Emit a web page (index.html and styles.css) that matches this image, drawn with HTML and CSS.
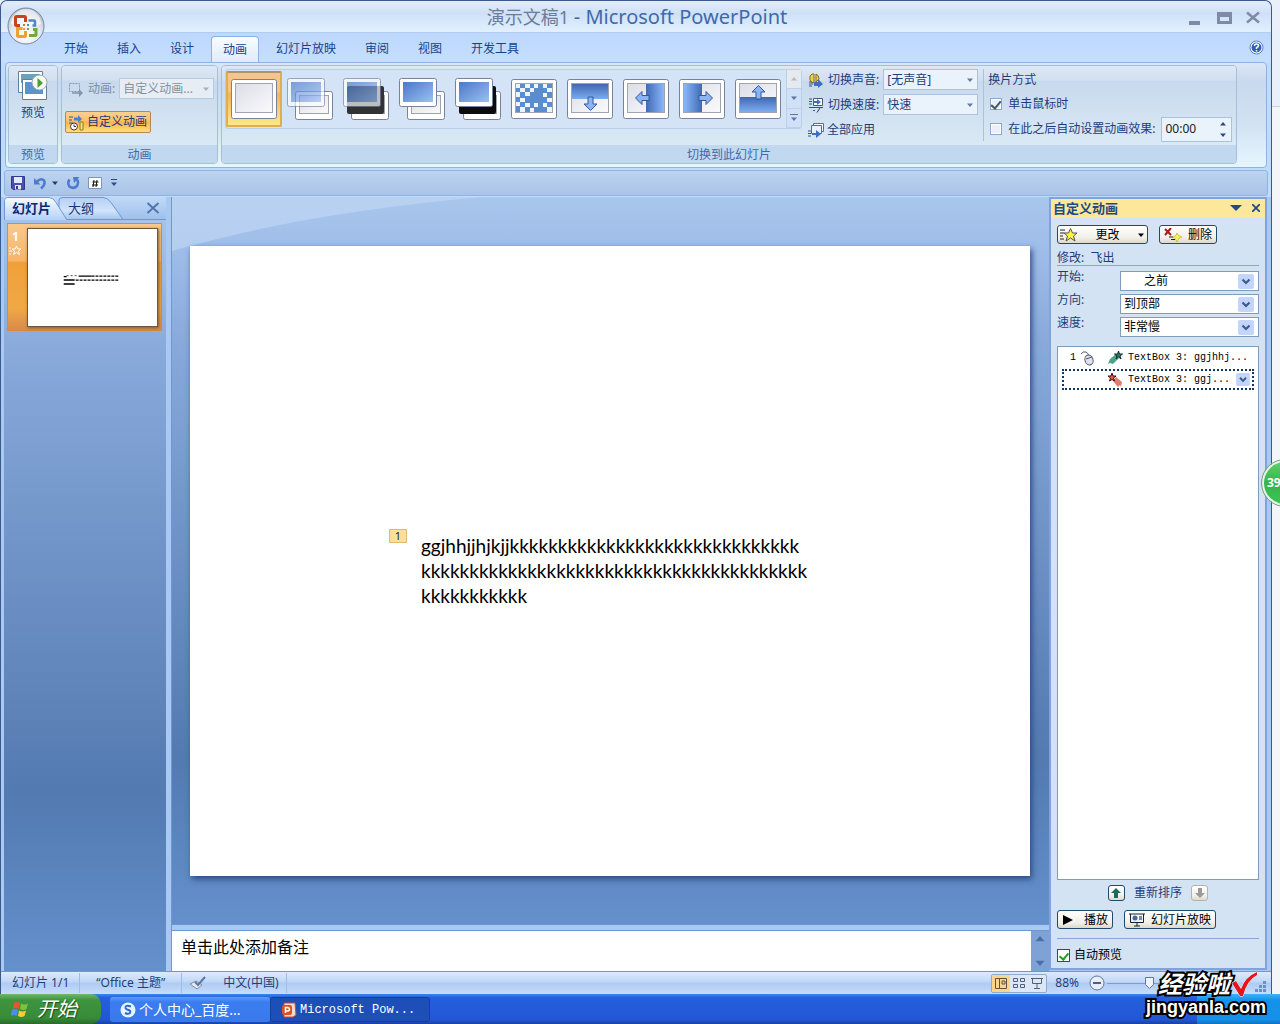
FILE: index.html
```html
<!DOCTYPE html>
<html lang="zh-CN">
<head>
<meta charset="utf-8">
<title>演示文稿1 - Microsoft PowerPoint</title>
<link rel="stylesheet" href="styles.css">
</head>
<body>
<svg class="defs" aria-hidden="true">
  <defs>
    <linearGradient id="blue" x1="0" y1="0" x2="1" y2="1"><stop offset="0" stop-color="#4a78c8"/><stop offset="1" stop-color="#9cc0f4"/></linearGradient>
    <linearGradient id="blueUp" x1="0" y1="0" x2="0" y2="1"><stop offset="0" stop-color="#3f68b0"/><stop offset="1" stop-color="#7eacf0"/></linearGradient>
    <linearGradient id="blueR" x1="0" y1="0" x2="1" y2="0"><stop offset="0" stop-color="#4069b4"/><stop offset="1" stop-color="#8ab8fa"/></linearGradient>
    <linearGradient id="blueL" x1="0" y1="0" x2="1" y2="0"><stop offset="0" stop-color="#8ab8fa"/><stop offset="1" stop-color="#4069b4"/></linearGradient>
    <linearGradient id="pale" x1="0" y1="0" x2="1" y2="1"><stop offset="0" stop-color="#dcdde6"/><stop offset="1" stop-color="#fbfbfd"/></linearGradient>
    <linearGradient id="tabOn" x1="0" y1="0" x2="0" y2="1"><stop offset="0" stop-color="#f6faff"/><stop offset="1" stop-color="#b6d2f6"/></linearGradient>
    <linearGradient id="tabOff" x1="0" y1="0" x2="0" y2="1"><stop offset="0" stop-color="#b4d0f6"/><stop offset="0.6" stop-color="#d2e4fb"/><stop offset="1" stop-color="#a4c4ee"/></linearGradient>
    <symbol id="frame" viewBox="0 0 46 40">
      <rect x=".5" y=".5" width="45" height="39" rx="2" fill="#fff" stroke="#76839a"/>
      <rect x="4.500" y="4.500" width="37" height="29" fill="url(#pale)" stroke="#a0a4b0"/>
    </symbol>
    <symbol id="backslide" viewBox="0 0 46 42">
      <rect x="8.500" y="13.500" width="37" height="28" rx="2" fill="#fff" stroke="#76839a"/>
      <rect x="12.500" y="17.500" width="29" height="18" fill="url(#pale)" stroke="#a0a4b0"/>
    </symbol>
    <symbol id="topslide" viewBox="0 0 46 42">
      <rect x=".5" y=".5" width="37" height="28" rx="2" fill="#fff" stroke="#76839a"/>
      <rect x="4" y="4" width="30" height="20" fill="url(#blue)"/>
    </symbol>
    <symbol id="down" viewBox="0 0 8 8"><path d="M1 2.500h6L4 6z" fill="currentColor"/></symbol>
    <symbol id="up" viewBox="0 0 8 8"><path d="M1 5.500h6L4 2z" fill="currentColor"/></symbol>
    <symbol id="chev" viewBox="0 0 16 15"><rect width="16" height="15" rx="2" fill="#c3d5fa"/><path d="M4.500 5.500 8 9l3.500-3.500" fill="none" stroke="#3d5a8c" stroke-width="2.200"/></symbol>
  </defs>
</svg>

<div class="screen">
<main class="window">
  <header class="titlebar">
    <button class="office" aria-label="Office">
      <svg viewBox="0 0 38 38" width="38" height="38">
        <defs><radialGradient id="orb" cx=".5" cy=".75" r=".7"><stop offset="0" stop-color="#fff"/><stop offset=".6" stop-color="#e2e6ee"/><stop offset="1" stop-color="#b3bccd"/></radialGradient></defs>
        <circle cx="19" cy="19" r="18" fill="url(#orb)" stroke="#76869f"/>
        <path d="M4 17a15 15 0 0 1 30 0q-15 6-30 0z" fill="#fff" opacity=".6"/>
        <g fill="none" stroke-width="3">
          <path d="M13 18.500H9.500q-1 0-1-1v-7q0-1 1-1h8q1 0 1 1V15" stroke="#c8421c"/>
          <path d="M21.500 13.500H27q1 0 1 1v4h-2.500" stroke="#4f86c6" stroke-width="2.500"/>
          <path d="M18.500 24v4.500q0 1-1 1h-6q-1 0-1-1v-7h5" stroke="#f0a030"/>
          <path d="M22 28.500h6q1 0 1-1v-5h-3" stroke="#6cab3c"/>
        </g>
        <g fill="#d9742c"><rect x="16" y="17" width="2" height="2"/><rect x="20" y="17" width="2" height="2" fill="#4f86c6"/><rect x="20" y="21" width="2" height="2" fill="#6cab3c"/><rect x="16" y="21" width="2" height="2" fill="#f0a030"/></g>
      </svg>
    </button>
    <h1 class="title">演示文稿1 <span>- Microsoft PowerPoint</span></h1>
    <div class="winbtns">
      <button aria-label="最小化"><svg width="16" height="16"><path d="M2 12h11v4H2z" fill="#7d8ba6"/></svg></button>
      <button aria-label="最大化"><svg width="16" height="16"><path d="M1 3h15v12H1zM4 8v4h9V8z" fill="#7d8ba6" fill-rule="evenodd"/></svg></button>
      <button aria-label="关闭"><svg width="16" height="16"><path d="M2 3.500 14 13.500M14 3.500 2 13.500" stroke="#7d8ba6" stroke-width="2.500"/></svg></button>
    </div>
  </header>

  <nav class="tabs">
    <button>开始</button><button>插入</button><button>设计</button><button class="on">动画</button><button>幻灯片放映</button><button>审阅</button><button>视图</button><button>开发工具</button>
    <button class="help" aria-label="帮助"><svg width="15" height="15" viewBox="0 0 15 15"><circle cx="7.500" cy="7.500" r="6.500" fill="#fff" stroke="#5b7fc0"/><circle cx="7.500" cy="7.500" r="5" fill="#2f5fbe"/><path d="M5.500 6q0-2 2-2t2 1.700q0 1-2 2V9M7.500 10v1.500" fill="none" stroke="#fff" stroke-width="1.500"/></svg></button>
  </nav>

  <section class="ribbon">
    <div class="group g-preview">
      <div class="gbody">
        <button class="big">
          <svg width="30" height="30" viewBox="0 0 30 30"><path d="M.5.500h24v21H.5z" fill="#fff" stroke="#5f7f9c"/><path d="M3 3h19v9H3z" fill="#6ca0bc"/><path d="M4.500 8.500h24v20h-24z" fill="#fff" stroke="#5f7f9c"/><path d="M7 11h18v12H7z" fill="#5b93cc"/><circle cx="21.500" cy="11.500" r="7.500" fill="#f6faf4" stroke="#9aa8b0"/><path d="M19.500 7l5.500 5-5.500 5z" fill="#4f9c34"/></svg>
          <span>预览</span>
        </button>
      </div>
      <div class="glabel">预览</div>
    </div>

    <div class="group g-anim">
      <div class="gbody anim">
        <div class="row">
          <svg width="16" height="16" viewBox="0 0 16 16"><path d="M1.500 2.500h10v8h-10z" fill="none" stroke="#8494ac" stroke-dasharray="2 1"/><path d="M4 12h8" stroke="#8494ac" stroke-width="1.500"/><path d="M11 8l4 4-4 4z" fill="#8494ac"/></svg>
          <label for="anim">动画:</label>
          <span class="pick dim"><select id="anim" disabled><option>自定义动画...</option></select><svg width="8" height="8"><use href="#down"/></svg></span>
        </div>
        <button class="custom">
          <svg width="17" height="17" viewBox="0 0 17 17"><path d="M1 3h4M1 6h3M1 9h4" stroke="#34528c"/><path d="M6 3.500h4V1l4 4-4 4V6.500H6z" fill="#4a7fd8"/><circle cx="6" cy="12.500" r="3.500" fill="#fff" stroke="#3c3c3c"/><path d="M6 10.500v2h2" fill="none" stroke="#333"/><path d="M12 8h3v8h-3z" fill="#f7e46c" stroke="#8a7a2c"/></svg>
          自定义动画
        </button>
      </div>
      <div class="glabel">动画</div>
    </div>

    <div class="group g-trans">
      <div class="gbody trans">
        <div class="gallery">
          <button class="cell sel" aria-label="无切换效果"><svg width="46" height="40"><use href="#frame"/></svg></button>
          <button class="cell" aria-label="平滑淡出"><svg width="46" height="42"><use href="#backslide"/><use href="#topslide" opacity=".65"/></svg></button>
          <button class="cell" aria-label="从全黑淡出"><svg width="46" height="42"><use href="#backslide"/><rect x="4" y="8" width="37" height="28" rx="2" fill="#303236"/><use href="#topslide" opacity=".68"/></svg></button>
          <button class="cell" aria-label="切出"><svg width="46" height="42"><use href="#backslide"/><use href="#topslide"/></svg></button>
          <button class="cell" aria-label="从全黑切出"><svg width="46" height="42"><use href="#backslide"/><rect x="4" y="8" width="37" height="28" rx="2" fill="#0c0c0e"/><use href="#topslide"/></svg></button>
          <button class="cell" aria-label="溶解"><svg width="46" height="40"><use href="#frame"/><rect x="5" y="5" width="36" height="28" fill="#5a8cd0"/><path fill="#eef4fb" d="M5 5h4v4H5zM14 5h5v4h-5zM9 9h5v4H9zM23 5h4v4h-4zM19 9h4v4h-4zM32 5h4v4h-4zM36 9h5v4h-5zM5 13h4v5H5zM14 13h5v4h-5zM32 14h4v4h-4zM5 23h4v4H5zM9 19h5v4H9zM9 28h5v5H9zM14 24h5v4h-5zM23 24h4v4h-4zM19 29h4v4h-4zM36 19h5v4h-5zM32 24h4v4h-4zM36 28h5v5h-5z"/></svg></button>
          <button class="cell" aria-label="向下擦除"><svg width="46" height="40"><use href="#frame"/><path d="M5 5h36v15H5z" fill="url(#blueUp)"/><path d="M21 18h5v7h4l-6.500 6.500L17 25h4z" fill="#8db4f2" stroke="#31599f"/></svg></button>
          <button class="cell" aria-label="向左擦除"><svg width="46" height="40"><use href="#frame"/><path d="M23 5h18v28H23z" fill="url(#blueR)"/><path d="M26 16.500v5h-7v4L12.500 19l6.500-6.500v4z" fill="#8db4f2" stroke="#31599f"/></svg></button>
          <button class="cell" aria-label="向右擦除"><svg width="46" height="40"><use href="#frame"/><path d="M5 5h18v28H5z" fill="url(#blueL)"/><path d="M20 16.500v5h7v4l6.500-6.500-6.500-6.500v4z" fill="#8db4f2" stroke="#31599f"/></svg></button>
          <button class="cell" aria-label="向上擦除"><svg width="46" height="40"><use href="#frame"/><path d="M5 18h36v15H5z" fill="url(#blueUp)"/><path d="M21 20h5v-7h4l-6.500-6.500L17 13h4z" fill="#8db4f2" stroke="#31599f"/></svg></button>
          <div class="gscroll">
            <button class="off" aria-label="上一行"><svg width="8" height="8"><use href="#up"/></svg></button>
            <button aria-label="下一行"><svg width="8" height="8"><use href="#down"/></svg></button>
            <button aria-label="其他"><svg width="8" height="10"><path d="M0 1.500h8" stroke="#5a76a4"/><path d="M1 4.500h6L4 8z" fill="#5a76a4"/></svg></button>
          </div>
        </div>

        <div class="opts">
          <svg width="16" height="16" viewBox="0 0 16 16"><path d="M2 4q2-3 4-2v9q-3 0-4-3zM8 2q3 1 3 5l-3 3z" fill="#f2d24c" stroke="#806a1c"/><path d="M1 10h3M1 12h4M1 14h3" stroke="#34528c"/><path d="M6 10h4V7l5 5-5 4v-2H6z" fill="#3f6cc4"/></svg>
          <label for="snd">切换声音:</label>
          <span class="pick"><select id="snd"><option>[无声音]</option></select><svg width="8" height="8"><use href="#down"/></svg></span>
          <svg width="16" height="16" viewBox="0 0 16 16"><path d="M1 2h3M1 4.500h3M1 7h3M1 10.500h14M5 13.500h2" stroke="#34528c"/><path d="M5.500 1.500h9v7h-9z" fill="#fff" stroke="#4a5a74"/><path d="M5 4h4V2l4 3-4 3V6H5z" fill="#3f6cc4"/><path d="M12 11l-3 4.500" stroke="#333"/></svg>
          <label for="spd">切换速度:</label>
          <span class="pick"><select id="spd"><option>快速</option></select><svg width="8" height="8"><use href="#down"/></svg></span>
          <button class="applyall"><svg width="16" height="16" viewBox="0 0 16 16"><path d="M5.500 1.500h10v8h-10z" fill="#fff" stroke="#5a6e8c"/><path d="M3.500 3.500h10v8h-10z" fill="#e8f0fa" stroke="#5a6e8c"/><path d="M0 9h3M0 11.500h3M0 14h3" stroke="#34528c"/><path d="M4 11h4V8l5 4-5 4v-3H4z" fill="#3f6cc4"/></svg>全部应用</button>
        </div>

        <fieldset class="advance">
          <legend>换片方式</legend>
          <label><input type="checkbox" class="tick" checked>单击鼠标时</label>
          <div class="after"><label><input type="checkbox" class="tick">在此之后自动设置动画效果:</label>
            <span class="spin"><input type="text" value="00:00" aria-label="时间"><span class="spinbtns"><button aria-label="增加"><svg width="8" height="8"><use href="#up"/></svg></button><button aria-label="减少"><svg width="8" height="8"><use href="#down"/></svg></button></span></span>
          </div>
        </fieldset>
      </div>
      <div class="glabel">切换到此幻灯片</div>
    </div>
  </section>

  <div class="qat">
    <button aria-label="保存"><svg width="14" height="14" viewBox="0 0 14 14"><path d="M.5.500h13v13H2l-1.500-1.500z" fill="#4a4fb0" stroke="#33388c"/><path d="M3 1h8v6H3z" fill="#dfeafc"/><path d="M4 9h6v4.500H4z" fill="#e8e8f4"/><path d="M5 10h2v3H5z" fill="#33388c"/></svg></button>
    <button class="undo" aria-label="撤消"><svg width="14" height="14" viewBox="0 0 14 14"><path d="M4 5.500Q8 1.500 11 4.500q2 4-3 8" fill="none" stroke="#4b7bd0" stroke-width="2.500"/><path d="M1 2v6.500h6.500z" fill="#4b7bd0"/></svg><svg width="6" height="8" viewBox="1 0 6 8"><use href="#down" width="8" height="8"/></svg></button>
    <button aria-label="重复"><svg width="14" height="14" viewBox="0 0 14 14"><path d="M3.500 3.500Q1 7 3.500 10.500q4 3 7.500-.5 2-4 0-6.500" fill="none" stroke="#4b7bd0" stroke-width="2.500"/><path d="M7 1h6.500L8 7z" fill="#4b7bd0"/></svg></button>
    <button aria-label="编号"><svg width="14" height="14" viewBox="0 0 14 14"><path d="M.5 1.500h13v11H.5z" fill="#fff" stroke="#7d93b8"/><path d="M6 4 5 11M9 4 8 11M4.500 6h6M4 9h6" stroke="#111"/></svg></button>
    <button class="more" aria-label="自定义"><svg width="8" height="10"><path d="M1 1.500h6" stroke="#2c4c86"/><path d="M1 4.500h6L4 8z" fill="#2c4c86"/></svg></button>
  </div>

  <div class="work">
    <aside class="outline">
      <div class="otabs">
        <svg class="oshape" viewBox="0 0 162 23" preserveAspectRatio="xMinYMin meet" height="23"><path d="M55 22.500V3q0-2.500 4-2.500h40q5 0 8 5l12 17z" fill="url(#tabOff)" stroke="#6d97d3"/><path d="M.5 23V3.500q0-3 3-3H45q4 0 7 5l11 17.500" fill="url(#tabOn)" stroke="#6d97d3"/></svg>
        <div class="obtns"><button class="on">幻灯片</button><button>大纲</button><button class="x" aria-label="关闭"><svg width="14" height="12"><path d="M1.500 1 12.500 11M12.500 1 1.500 11" stroke="#4b74ad" stroke-width="1.800"/></svg></button></div>
      </div>
      <div class="thumb">
        <div class="num"><b>1</b><svg width="12" height="11" viewBox="0 0 12 11"><path d="M7.500 1l1.200 3H12L9.500 6l1 3.500-3-2-3 2 1-3.500L3 4h3.200zM0 3h2M0 6h3M0 9h2" fill="none" stroke="#fff"/></svg></div>
        <div class="mini"><svg viewBox="0 0 130 98"><path d="M36 51.500h11M36 55.500h11M36 48h3M51 47.500h13" stroke="#000" stroke-width="1.500"/><path d="M39 47h12" stroke="#555" stroke-dasharray="2 2"/><path d="M64 47.500h27M48 51.500h43" stroke="#000" stroke-dasharray="3 1" stroke-width="1.300"/></svg></div>
      </div>
    </aside>

    <section class="center">
      <div class="stage">
        <svg class="swoosh" viewBox="0 0 876 60" preserveAspectRatio="none"><path d="M0 0H310Q130 16 0 54z" fill="#c4d9f5" opacity=".6"/></svg>
        <div class="slide">
          <span class="seq">1</span>
          <p class="textbox">ggjhhjjhjkjjkkkkkkkkkkkkkkkkkkkkkkkkkkkkkk<br>kkkkkkkkkkkkkkkkkkkkkkkkkkkkkkkkkkkkkkkk<br>kkkkkkkkkkk</p>
        </div>
      </div>
      <div class="notes">
        <textarea aria-label="备注" rows="1">单击此处添加备注</textarea>
        <div class="nscroll"><svg width="12" height="12"><use href="#up"/></svg><svg width="12" height="12"><use href="#down"/></svg></div>
      </div>
    </section>

    <aside class="pane">
      <div class="phead"><b>自定义动画</b><svg width="12" height="6"><path d="M0 0h12L6 6z" fill="#1f4a86"/></svg><button aria-label="关闭"><svg width="8" height="8"><path d="M0 0 8 8M8 0 0 8" stroke="#1f4a86" stroke-width="1.800"/></svg></button></div>
      <div class="pbody">
        <div class="prow">
          <button class="xp change"><svg width="18" height="14" viewBox="0 0 18 14"><path d="M0 2h5M0 5h4M0 8h3M0 11h4" stroke="#222"/><path d="M10.500.500l2 4.500H17l-3.500 3 1.500 5-4.500-3L6 13l1.500-5L4 5h4.500z" fill="#fff34a" stroke="#555"/></svg><span>更改</span><svg width="8" height="8"><use href="#down"/></svg></button>
          <button class="xp"><svg width="18" height="14" viewBox="0 0 18 14"><path d="M1 1l6 6M7 0 1 7" stroke="#a81c1c" stroke-width="2"/><path d="M5 9h4M7 11.500h4" stroke="#222"/><path d="M13 5l1.500 2.500L18 9l-3 1.500L13 14l-1.500-3L9 9l3-1.500z" fill="#fff34a" stroke="#b0a030" stroke-width=".6"/></svg><span>删除</span></button>
        </div>
        <p class="effect">修改:  飞出</p>
        <div class="fields">
          <label for="f1">开始:</label><span class="drop"><select id="f1" class="indent"><option>之前</option></select><svg width="16" height="15"><use href="#chev"/></svg></span>
          <label for="f2">方向:</label><span class="drop"><select id="f2"><option>到顶部</option></select><svg width="16" height="15"><use href="#chev"/></svg></span>
          <label for="f3">速度:</label><span class="drop"><select id="f3"><option>非常慢</option></select><svg width="16" height="15"><use href="#chev"/></svg></span>
        </div>
        <ul class="effects">
          <li><span class="n">1</span><svg width="14" height="16" viewBox="0 0 14 16"><path d="M1 4q2-3 5-2 2 1 3 4" fill="none" stroke="#556"/><ellipse cx="9" cy="10" rx="4" ry="5" fill="#dfe2ea" stroke="#556" transform="rotate(-20 9 10)"/><path d="M6 9l6-2" stroke="#556"/></svg><svg class="ico" width="16" height="16" viewBox="0 0 16 16"><path d="M1 14l2-5 6-5 3 4-6 6-3-1z" fill="#4fa08c"/><path d="M11.500 1l1 3h3l-2.500 2 1 3-2.500-2L9 9l1-3-2.500-2h3z" fill="#2c7a5c" stroke="#133"/></svg><span class="t">TextBox 3: ggjhhj...</span></li>
          <li class="sel"><span class="n"></span><span class="gap"></span><svg class="ico" width="16" height="16" viewBox="0 0 16 16"><path d="M14 15l1-5-6-5-3 4 5 6 2-2z" fill="#e07c70"/><path d="M5 1l1 3h3L6.500 6l1 3L5 7.500 2.500 9l1-3L1 4h3z" fill="#d85a4c" stroke="#411"/></svg><span class="t">TextBox 3: ggj...</span><svg class="c" width="14" height="13"><use href="#chev"/></svg></li>
        </ul>
        <div class="reorder"><button class="xp sq" aria-label="上移"><svg width="10" height="10"><path d="M5 0l5 5H7v5H3V5H0z" fill="#1d6b5a"/></svg></button><span>重新排序</span><button class="xp sq off" disabled aria-label="下移"><svg width="10" height="10"><path d="M5 10l5-5H7V0H3v5H0z" fill="#9b9b97"/></svg></button></div>
        <div class="prow play">
          <button class="xp"><svg width="16" height="12"><path d="M1 1l10 5-10 5z"/></svg><span>播放</span></button>
          <button class="xp"><svg width="16" height="14" viewBox="0 0 16 14"><path d="M0 1h16M1.500 1v8.500h13V1M5 13h6M8 10v3" fill="none" stroke="#123"/><circle cx="6" cy="5" r="2.500" fill="#3d6aa8"/><path d="M10 4h3M10 6h3" stroke="#123"/></svg><span>幻灯片放映</span></button>
        </div>
        <label class="auto"><input type="checkbox" checked>自动预览</label>
      </div>
    </aside>
  </div>

  <footer class="status">
    <span>幻灯片 1/1</span><span>“Office 主题”</span><span class="lang"><svg width="18" height="14" viewBox="0 0 18 14"><path d="M1 8l6-3 6 4-5 4z" fill="#e6eaf2" stroke="#7d8ba6"/><path d="M6 6l3 3 7-8" fill="none" stroke="#5f76a4" stroke-width="2"/></svg>中文(中国)</span>
    <div class="views">
      <button class="on" aria-label="普通视图"><svg width="12" height="11"><path d="M.5.500h11v10H.5zM4.500.500v10M7 3h3v3H7z" fill="none" stroke="#5c5340"/></svg></button>
      <button aria-label="幻灯片浏览"><svg width="12" height="11"><path d="M.5.500h4v3h-4zM7.500.500h4v3h-4zM.5 6.500h4v3h-4zM7.500 6.500h4v3h-4z" fill="none" stroke="#4e5f7e"/></svg></button>
      <button aria-label="幻灯片放映"><svg width="12" height="11"><path d="M0 .5h12M1.500.500v5h9v-5M6 6v4M3 10.500h6" fill="none" stroke="#4e5f7e"/></svg></button>
    </div>
    <span class="zoom">88%</span>
    <svg class="slider" viewBox="0 0 146 16" width="146" height="16"><circle cx="8" cy="8" r="7" fill="#e8eef8" stroke="#5f76a0"/><path d="M4 8h8" stroke="#4c5f88" stroke-width="2"/><path d="M18 8.500h110" stroke="#7d9bcb"/><path d="M56.500 2.500h8v7l-4 4-4-4z" fill="#eef3fb" stroke="#5f76a0"/></svg>
    <svg class="grip" width="12" height="12"><path d="M8 0h3v3H8zM4 4h3v3H4zM8 4h3v3H8zM0 8h3v3H0zM4 8h3v3H4zM8 8h3v3H8z" fill="#6d8fc4"/></svg>
  </footer>
</main>

<footer class="taskbar">
  <button class="start"><svg width="20" height="18" viewBox="0 0 20 18"><path d="M3 3q3-2 6 0L7.500 9q-3-2-6 0z" fill="#e8542c"/><path d="M10 3.500q3 2 7 0L15.500 9q-3 2-6.500 0z" fill="#7fc23c"/><path d="M1 10q3-2 6 0l-1.500 6q-3-2-6 0z" fill="#4d8df0"/><path d="M8 10.500q3 2 7 0L13.500 16q-3 2-6.500 0z" fill="#f8cc38"/></svg>开始</button>
  <button class="task"><svg width="16" height="16" viewBox="0 0 16 16"><circle cx="8" cy="8" r="7.500" fill="#e8f4ff"/><path d="M11 4.500Q5 2.500 5.500 6q.5 1.500 3 2t1.500 3q-2 1.500-5 0" fill="none" stroke="#2a6ad0" stroke-width="2"/></svg><span>个人中心_百度...</span></button>
  <button class="task on"><svg width="16" height="16" viewBox="0 0 16 16"><path d="M3 1h11l1 12-3 2H3z" fill="#f6d8cc" stroke="#c8502c"/><rect x="1" y="3" width="10" height="10" rx="2" fill="#d8542c"/><path d="M4.500 11V5.500h2q2 .2 2 1.800t-2 1.700h-2" fill="none" stroke="#fff" stroke-width="1.500"/></svg><span class="mono">Microsoft Pow...</span></button>
  <div class="tray"></div>
</footer>

<div class="bubble">39</div>
<div class="mark"><div class="m1">经验啦<svg width="28" height="26" viewBox="0 0 28 26"><path d="M2 12l4-2 5 8Q15 6 27 1v3Q17 9 13 25h-3z" fill="#e8141c" stroke="#fff"/></svg></div><div class="m2">jingyanla.com</div></div>
</div>
</body>
</html>
```
FILE: styles.css
```css
* { box-sizing: border-box; }
body {
  margin: 0;
  font: 12px/16px "Noto Sans", "Noto Sans CJK SC", sans-serif;
  color: #1e3c7b;
}
button, input, select, textarea { font: inherit; color: inherit; margin: 0; }
button { padding: 0; border: 0; background: none; display: flex; align-items: center; white-space: nowrap; }
select, input[type="checkbox"] { appearance: none; }
svg { display: block; flex: none; }
p, h1, ul, fieldset { margin: 0; padding: 0; border: 0; }
.defs { position: absolute; width: 0; height: 0; }

.screen {
  position: relative;
  min-height: 100vh;
  display: flex;
  flex-direction: column;
  overflow: hidden;
  background: linear-gradient(#e9f0f9 106px, #c9d3e0 106px, #c9d3e0 107px, #f4f5f9 107px);
}
.window {
  flex: 1;
  margin-right: 8px;
  display: flex;
  flex-direction: column;
  border: 1px solid #3b5a8c;
  border-bottom: 0;
  border-radius: 7px 7px 0 0;
  background: #bfdbff;
}

/* title bar */
.titlebar {
  position: relative;
  display: flex;
  align-items: center;
  height: 32px;
  padding-right: 10px;
  border-radius: 7px 7px 0 0;
  border-bottom: 1px solid #b3cbee;
  background: linear-gradient(#e3edfb, #cfe0f6 40%, #d5e6fb 60%, #e2f0fe);
}
.office { position: absolute; left: 6px; top: 6px; z-index: 2; }
.title { flex: 1; padding-left: 86px; text-align: center; font-size: 18px; line-height: 24px; font-weight: 400; color: #6a7c98; }
.title span { font-size: 20px; color: #3e6aaa; }
.winbtns { display: flex; gap: 13px; }

/* tabs */
.tabs { display: flex; gap: 5px; height: 29px; padding: 3px 7px 0 51px; align-items: stretch; background: linear-gradient(#bdd8fd, #c6deff); }
.tabs button { padding: 0 12px; color: #15428b; }
.tabs .on {
  padding: 0 11px;
  border: 1px solid #8db2e3;
  border-bottom: 0;
  border-radius: 4px 4px 0 0;
  background: linear-gradient(#f8fcff, #dfebf8);
}
.tabs .help { margin-left: auto; padding: 0 0 4px; }

/* ribbon */
.ribbon {
  display: flex;
  gap: 3px;
  margin: 0 4px;
  padding: 2px 2px 3px;
  border: 1px solid #8db2e3;
  border-radius: 4px;
  background: linear-gradient(#dbe7f5, #c9d9ed 18%, #d3e2f2 60%, #e6f6ff);
}
.group { display: flex; flex-direction: column; border: 1px solid #a3bfdc; border-radius: 4px; overflow: hidden; }
.gbody { flex: 1; min-height: 79px; background: linear-gradient(#dee8f5, #d1dff0 18%, #c8d9ed 19%, #d9e9f5); }
.glabel { height: 18px; line-height: 19px; text-align: center; color: #3e6aaa; background: #c1d8f0; }
.g-preview { flex: 0 0 50px; }
.g-anim { flex: 0 0 157px; }
.g-trans { flex: 0 1 1016px; }
.big { flex-direction: column; gap: 4px; width: 100%; padding-top: 5px; }
.anim { display: flex; flex-direction: column; gap: 12px; padding: 12px 3px 0; align-items: flex-start; }
.row { display: flex; align-items: center; gap: 4px; color: #7d8ba0; width: 100%; padding-left: 3px; }
.row label { white-space: nowrap; }
.pick { display: grid; flex: 1; grid-template-columns: 1fr 14px; align-items: center; height: 21px; border: 1px solid #abc1de; background: #eaf2fb; }
.pick select { grid-area: 1 / 1 / 2 / 3; width: 100%; min-width: 0; height: 19px; padding: 0 12px 0 3px; border: 0; background: none; line-height: 18px; }
.pick svg { grid-area: 1 / 2; justify-self: center; pointer-events: none; color: #5f7ba8; }
.pick.dim { background: #e6edf4; border-color: #b8cade; }
.pick.dim select { opacity: 1; color: #84909f; }
.pick.dim svg { color: #a6b0bc; }
.custom {
  gap: 2px;
  height: 22px;
  padding: 0 3px 0 2px;
  border: 1px solid #b58a4c;
  border-radius: 2px;
  background: linear-gradient(#fbcf90, #fcc067 45%, #fbb24a 50%, #ffe07c);
}

.trans { display: flex; align-items: flex-start; padding: 3px 3px 0; }
.gallery { display: flex; height: 60px; margin-right: 6px; border: 1px solid #b9d0ec; background: #d4e3f5; border-radius: 3px; }
.cell { width: 56px; height: 56px; margin-top: 1px; justify-content: center; }
.cell.sel { background: linear-gradient(#f4c490, #fbc678 35%, #f5b35c 40%, #ffe78c); border: 2px solid #e0ac54; border-top-color: #b09468; border-radius: 2px; }
.gscroll { display: flex; flex-direction: column; width: 15px; }
.gscroll button { flex: 1; justify-content: center; border: 1px solid #bdd0ea; border-width: 0 0 1px 1px; color: #5a76a4; background: #cfe0f7; }
.gscroll .off { color: #b5b9c0; background: #e4eaf0; }
.opts { display: grid; grid-template-columns: 16px auto 95px; column-gap: 4px; row-gap: 4px; align-items: center; }
.opts label { white-space: nowrap; }
.applyall { grid-column: 1 / 4; gap: 3px; height: 21px; }
.advance { display: flex; flex-direction: column; flex: 1; min-width: 0; margin-left: 5px; padding-left: 4px; border-left: 1px solid #a9c2e0; }
.advance legend { float: left; padding: 0; height: 22px; line-height: 22px; }
.advance > label { display: flex; align-items: center; height: 26px; }
.tick { width: 12px; height: 12px; margin: 0 6px 0 2px; border: 1px solid #8ea6c8; background: #e9f0f8; box-shadow: inset 0 0 0 1px #fff; display: grid; place-items: center; }
.tick:checked::after { content: ""; width: 4px; height: 8px; border: solid #46566e; border-width: 0 2px 2px 0; transform: rotate(40deg); }
.after { display: flex; align-items: center; height: 24px; gap: 6px; }
.after label { display: flex; align-items: center; white-space: nowrap; }
.spin { display: flex; width: 71px; height: 25px; border: 1px solid #abc1de; background: #eaf2fb; }
.spin input { flex: 1; width: 40px; padding: 0 3px; border: 0; background: none; color: #222; }
.spinbtns { display: flex; flex-direction: column; width: 16px; justify-content: center; align-items: center; gap: 3px; color: #2b4a86; }

/* quick access bar */
.qat { display: flex; align-items: center; height: 26px; margin: 2px 3px 1px; padding: 0 0 1px 6px; border: 1px solid #8fb3e4; border-radius: 3px; background: linear-gradient(#bdd3f0, #a9c4e9); }
.qat button { margin-right: 8px; }
.qat .undo { gap: 5px; }

/* work area */
.work {
  flex: 1;
  display: grid;
  grid-template-columns: 162px 1fr 218px;
  padding: 0 4px 0 3px;
  background: #a9c8f2;
}
.outline, .stage { background: linear-gradient(#a9c6ec, #9dbce8 8%, #88a9da 20%, #537ab1 77%, #6490cc); }
.otabs { display: grid; height: 23px; border-bottom: 1px solid #6d97d3; background: linear-gradient(#c2d9f7, #9fc0ec); }
.oshape { grid-area: 1 / 1; }
.obtns { grid-area: 1 / 1; display: flex; align-items: center; padding: 0 6px 2px 8px; color: #16387c; }
.obtns button { font-size: 13px; }
.obtns .on { font-weight: 700; margin-right: 17px; color: #0c2a70; }
.obtns .x { margin-left: auto; }
.thumb { display: flex; margin: 3px 4px 0 3px; padding: 4px 3px 3px 0; border: 1px solid #d98a3c; background: linear-gradient(#f9c98c, #f8b468 35%, #f0a03a 36%, #f0a845 80%, #d88a4c); }
.num { width: 19px; padding: 1px 0 0 1px; color: #fff; }
.num b { display: block; padding-left: 3px; line-height: 16px; }
.mini { flex: 1; aspect-ratio: 130 / 98; border: 1px solid #6b5640; background: #fff; box-shadow: 1px 1px 3px #8a5a2c; }

.center { display: flex; flex-direction: column; min-width: 0; margin-left: 5px; border-left: 1px solid #6d97d3; }
.stage { flex: 1; display: grid; align-items: center; padding: 0 19px 0 18px; border-bottom: 1px solid #6d97d3; grid-template-columns: 1fr; grid-template-rows: 1fr; }
.swoosh { grid-area: 1 / 1; width: calc(100% + 37px); height: 60px; margin: 0 -19px 0 -18px; align-self: start; }
.slide { position: relative; grid-area: 1 / 1; aspect-ratio: 4 / 3; background: #fff; box-shadow: 2px 3px 6px #2c4a7c; }
.seq { position: absolute; left: 199px; top: 283px; width: 18px; height: 14px; border: 1px solid #e0bc70; background: #fce09a; color: #222; font-size: 11px; line-height: 12px; text-align: center; }
.textbox { position: absolute; left: 231px; top: 287px; font-family: Lato, "Noto Sans CJK SC", sans-serif; font-size: 19px; line-height: 25px; color: #000; white-space: nowrap; }
.notes { display: flex; margin-top: 5px; height: 41px; border-top: 1px solid #6d97d3; background: #fff; }
.notes textarea { flex: 1; padding: 4px 9px; border: 0; resize: none; overflow: hidden; color: #000; font-size: 16px; line-height: 24px; }
.nscroll { width: 18px; display: flex; flex-direction: column; justify-content: space-between; align-items: center; padding: 2px 0; background: #7fa2d6; color: #4a6fa8; }

/* task pane */
.pane { display: flex; flex-direction: column; margin-bottom: 1px; border: 2px solid #7fa3dc; background: #d3e3f4; }
.phead { display: flex; align-items: center; gap: 10px; height: 19px; padding: 0 5px 2px 2px; background: #fde79b; color: #1f4a86; }
.phead b { flex: 1; font-size: 13px; }
.pbody { flex: 1; display: flex; flex-direction: column; padding: 7px 6px 5px; }
.prow { display: flex; gap: 11px; }
.xp { height: 19px; gap: 6px; padding: 0 4px; border: 1px solid #1f4a70; border-radius: 3px; background: linear-gradient(#fff, #f0efe8 70%, #dcd8cc); color: #000; }
.change { width: 91px; justify-content: space-between; padding: 0 2px; }
.effect { margin-top: 6px; height: 16px; border-bottom: 1px solid #86a5d4; white-space: pre; }
.fields { display: grid; grid-template-columns: 63px 1fr; row-gap: 3px; margin-top: 5px; }
.fields label { line-height: 12px; }
.drop { display: grid; grid-template-columns: 1fr 20px; align-items: center; height: 20px; border: 1px solid #7f9db9; background: #fff; }
.drop select { grid-area: 1 / 1 / 2 / 3; height: 18px; padding: 0 3px; border: 0; background: none; color: #000; line-height: 16px; }
.drop .indent { padding-left: 23px; }
.drop svg { grid-area: 1 / 2; pointer-events: none; }
.effects { flex: 1; margin-top: 9px; padding: 0 4px; border: 1px solid #7f9db9; background: #fff; list-style: none; color: #000; font-size: 10px; }
.effects li { display: flex; align-items: center; height: 22px; padding: 0 2px; }
.effects .sel { height: 21px; padding: 0; border: 2px dotted #14385e; }
.effects .n, .effects .t, .mono { font-family: "Liberation Mono", monospace; }
.n { width: 16px; padding-left: 6px; }
.gap { width: 14px; }
.ico { margin: 0 5px 0 13px; }
.t { flex: 1; white-space: nowrap; }
.c { margin-right: 2px; }
.reorder { display: flex; justify-content: center; align-items: center; gap: 9px; height: 26px; }
.sq { width: 17px; height: 16px; padding: 0; justify-content: center; }
.sq.off { border-color: #b4b4ac; }
.play { padding: 4px 0 9px; border-bottom: 1px solid #86a5d4; }
.auto { display: flex; align-items: center; gap: 4px; padding-top: 8px; color: #000; }
.auto input { width: 13px; height: 13px; border: 1px solid #1d5180; background: #fff; display: grid; place-items: center; }
.auto input:checked::after { content: ""; width: 4px; height: 7px; border: solid #21a121; border-width: 0 2px 2px 0; transform: rotate(40deg); }

/* status bar */
.status { display: flex; align-items: center; height: 23px; padding-left: 4px; border-top: 1px solid #6d97d3; background: linear-gradient(#dceafc, #c0d7f6 45%, #aecbf2 50%, #c6dcfa); }
.status > span { padding: 0 10px 0 7px; line-height: 20px; border-right: 1px solid #9dbde8; }
.status > span:nth-child(2) { padding: 0 16px; }
.status > .lang { display: flex; align-items: center; gap: 16px; padding: 0 7px; }
.views { display: flex; margin-left: auto; border: 1px solid #8fa9d0; border-radius: 2px; background: #dbe7f7; }
.views button { width: 18px; height: 17px; justify-content: center; }
.views .on { background: #fbd58a; }
.status > .zoom { border: 0; padding: 0 10px 0 8px; }
.grip { margin: 8px 4px 0 20px; }

/* taskbar */
.taskbar { display: flex; height: 30px; background: linear-gradient(#3f84f0, #245fdc 12%, #2257d4 85%, #1941a5); }
.start {
  width: 101px;
  gap: 6px;
  padding-left: 11px;
  border-radius: 0 10px 10px 0;
  font-size: 20px;
  font-style: italic;
  color: #fff;
  text-shadow: 1px 1px 1px #1c4c1c;
  background: linear-gradient(#6cb86c, #3f9440 20%, #388c38 80%, #2a6a2a);
}
.task { width: 160px; height: 25px; margin: 3px 0 0; padding-left: 10px; gap: 3px; border-radius: 3px; font-size: 14px; color: #fff; background: linear-gradient(#5c9cfa, #3b7df0 20%, #3a79ea); }
.task:nth-child(2) { margin-left: 9px; }
.task.on { background: #1e4fb8; border: 1px solid #173f98; }
.mono { font-size: 12px; }
.tray { margin-left: auto; width: 83px; background: linear-gradient(#3cb4f4, #1692ea 20%, #1490e8 85%, #1070c0); }

/* floating widgets */
.bubble { position: absolute; left: calc(100% - 18px); top: 460px; width: 46px; height: 46px; padding-left: 3px; border: 2px solid #e8f4e8; outline: 1px solid #7c9c84; border-radius: 50%; background: linear-gradient(#5fd070, #35b44c 50%, #3cc455); color: #fff; font-weight: 700; font-size: 12px; line-height: 42px; }
.mark { position: absolute; right: 14px; bottom: 7px; width: 126px; color: #fff; font-style: italic; font-weight: 700; -webkit-text-stroke: 4px #000; paint-order: stroke fill; }
.m1 { display: flex; align-items: center; justify-content: flex-end; font-size: 24px; line-height: 24px; padding-right: 8px; }
.m2 { font-family: "Liberation Sans", sans-serif; font-style: normal; font-size: 18px; line-height: 20px; text-align: right; }
```
